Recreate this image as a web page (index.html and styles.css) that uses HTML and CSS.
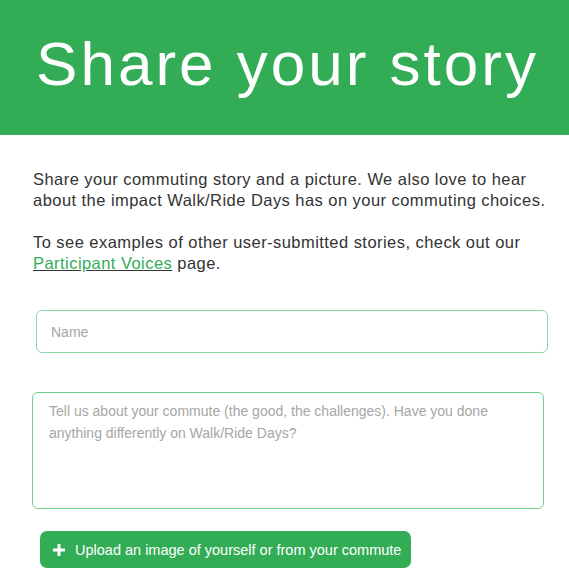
FILE: index.html
```html
<!DOCTYPE html>
<html lang="en">
<head>
<meta charset="utf-8">
<title>Share your story</title>
<link rel="stylesheet" href="styles.css">
</head>
<body>
<header class="hero">
  <h1 class="hero-title">Share your story</h1>
</header>
<main class="content">
  <p class="intro">Share your commuting story and a picture. We also love to hear about the impact Walk/Ride Days has on your commuting choices.<br><br>To see examples of other user-submitted stories, check out our <a href="#" class="link">Participant Voices</a> page.</p>
  <form class="story-form">
    <input class="field field-name" type="text" placeholder="Name">
    <textarea class="field field-story" placeholder="Tell us about your commute (the good, the challenges). Have you done anything differently on Walk/Ride Days?"></textarea>
    <button type="button" class="upload-btn">
      <svg class="plus" width="14" height="14" viewBox="0 0 14 14" aria-hidden="true"><path d="M7 1v12M1 7h12" stroke="#fff" stroke-width="3" stroke-linecap="butt"/></svg>
      <span>Upload an image of yourself or from your commute</span>
    </button>
  </form>
</main>
</body>
</html>
```

FILE: styles.css
```css
* { box-sizing: border-box; }
html, body { margin: 0; padding: 0; background: #fff; }
body { font-family: "Liberation Sans", Arial, sans-serif; color: #333; }

.hero {
  background: #32ad55;
  height: 135px;
  display: flex;
  align-items: center;
  justify-content: center;
}
.hero-title {
  margin: 0;
  color: #fff;
  font-weight: 400;
  font-size: 62px;
  letter-spacing: 3px;
  line-height: 1;
  padding-left: 6px;
  padding-bottom: 8px;
}

.content { padding: 34px 20px 0 33px; }

.intro {
  margin: 0;
  font-size: 16.5px;
  letter-spacing: 0.45px;
  line-height: 21px;
  color: #333;
}
.link { color: #32ad55; text-decoration: underline; text-decoration-color: #333; }

.story-form {
  display: flex;
  flex-direction: column;
  align-items: flex-start;
  margin-top: 36px;
}
.field {
  font-family: "Liberation Sans", Arial, sans-serif;
  font-size: 14px;
  color: #333;
  border: 1.5px solid #8cd9a3;
  border-radius: 6px;
  background: #fff;
  outline: none;
}
.field::placeholder { color: #a6a6a6; }
.field-name {
  margin-left: 3px;
  width: 512px;
  height: 43px;
  padding: 0 14px;
}
.field-story {
  margin-top: 39px;
  margin-left: -1px;
  width: 512px;
  height: 117px;
  padding: 7px 16px;
  line-height: 22px;
  resize: none;
  border-color: #6fcf8a;
}
.upload-btn {
  margin-top: 22px;
  margin-left: 7px;
  display: flex;
  align-items: center;
  gap: 9px;
  height: 37px;
  padding: 0 10px 0 12px;
  white-space: nowrap;
  background: #32ad55;
  color: #fff;
  border: none;
  border-radius: 7px;
  font-family: "Liberation Sans", Arial, sans-serif;
  font-size: 14.5px;
}
.plus { flex: none; }
```
